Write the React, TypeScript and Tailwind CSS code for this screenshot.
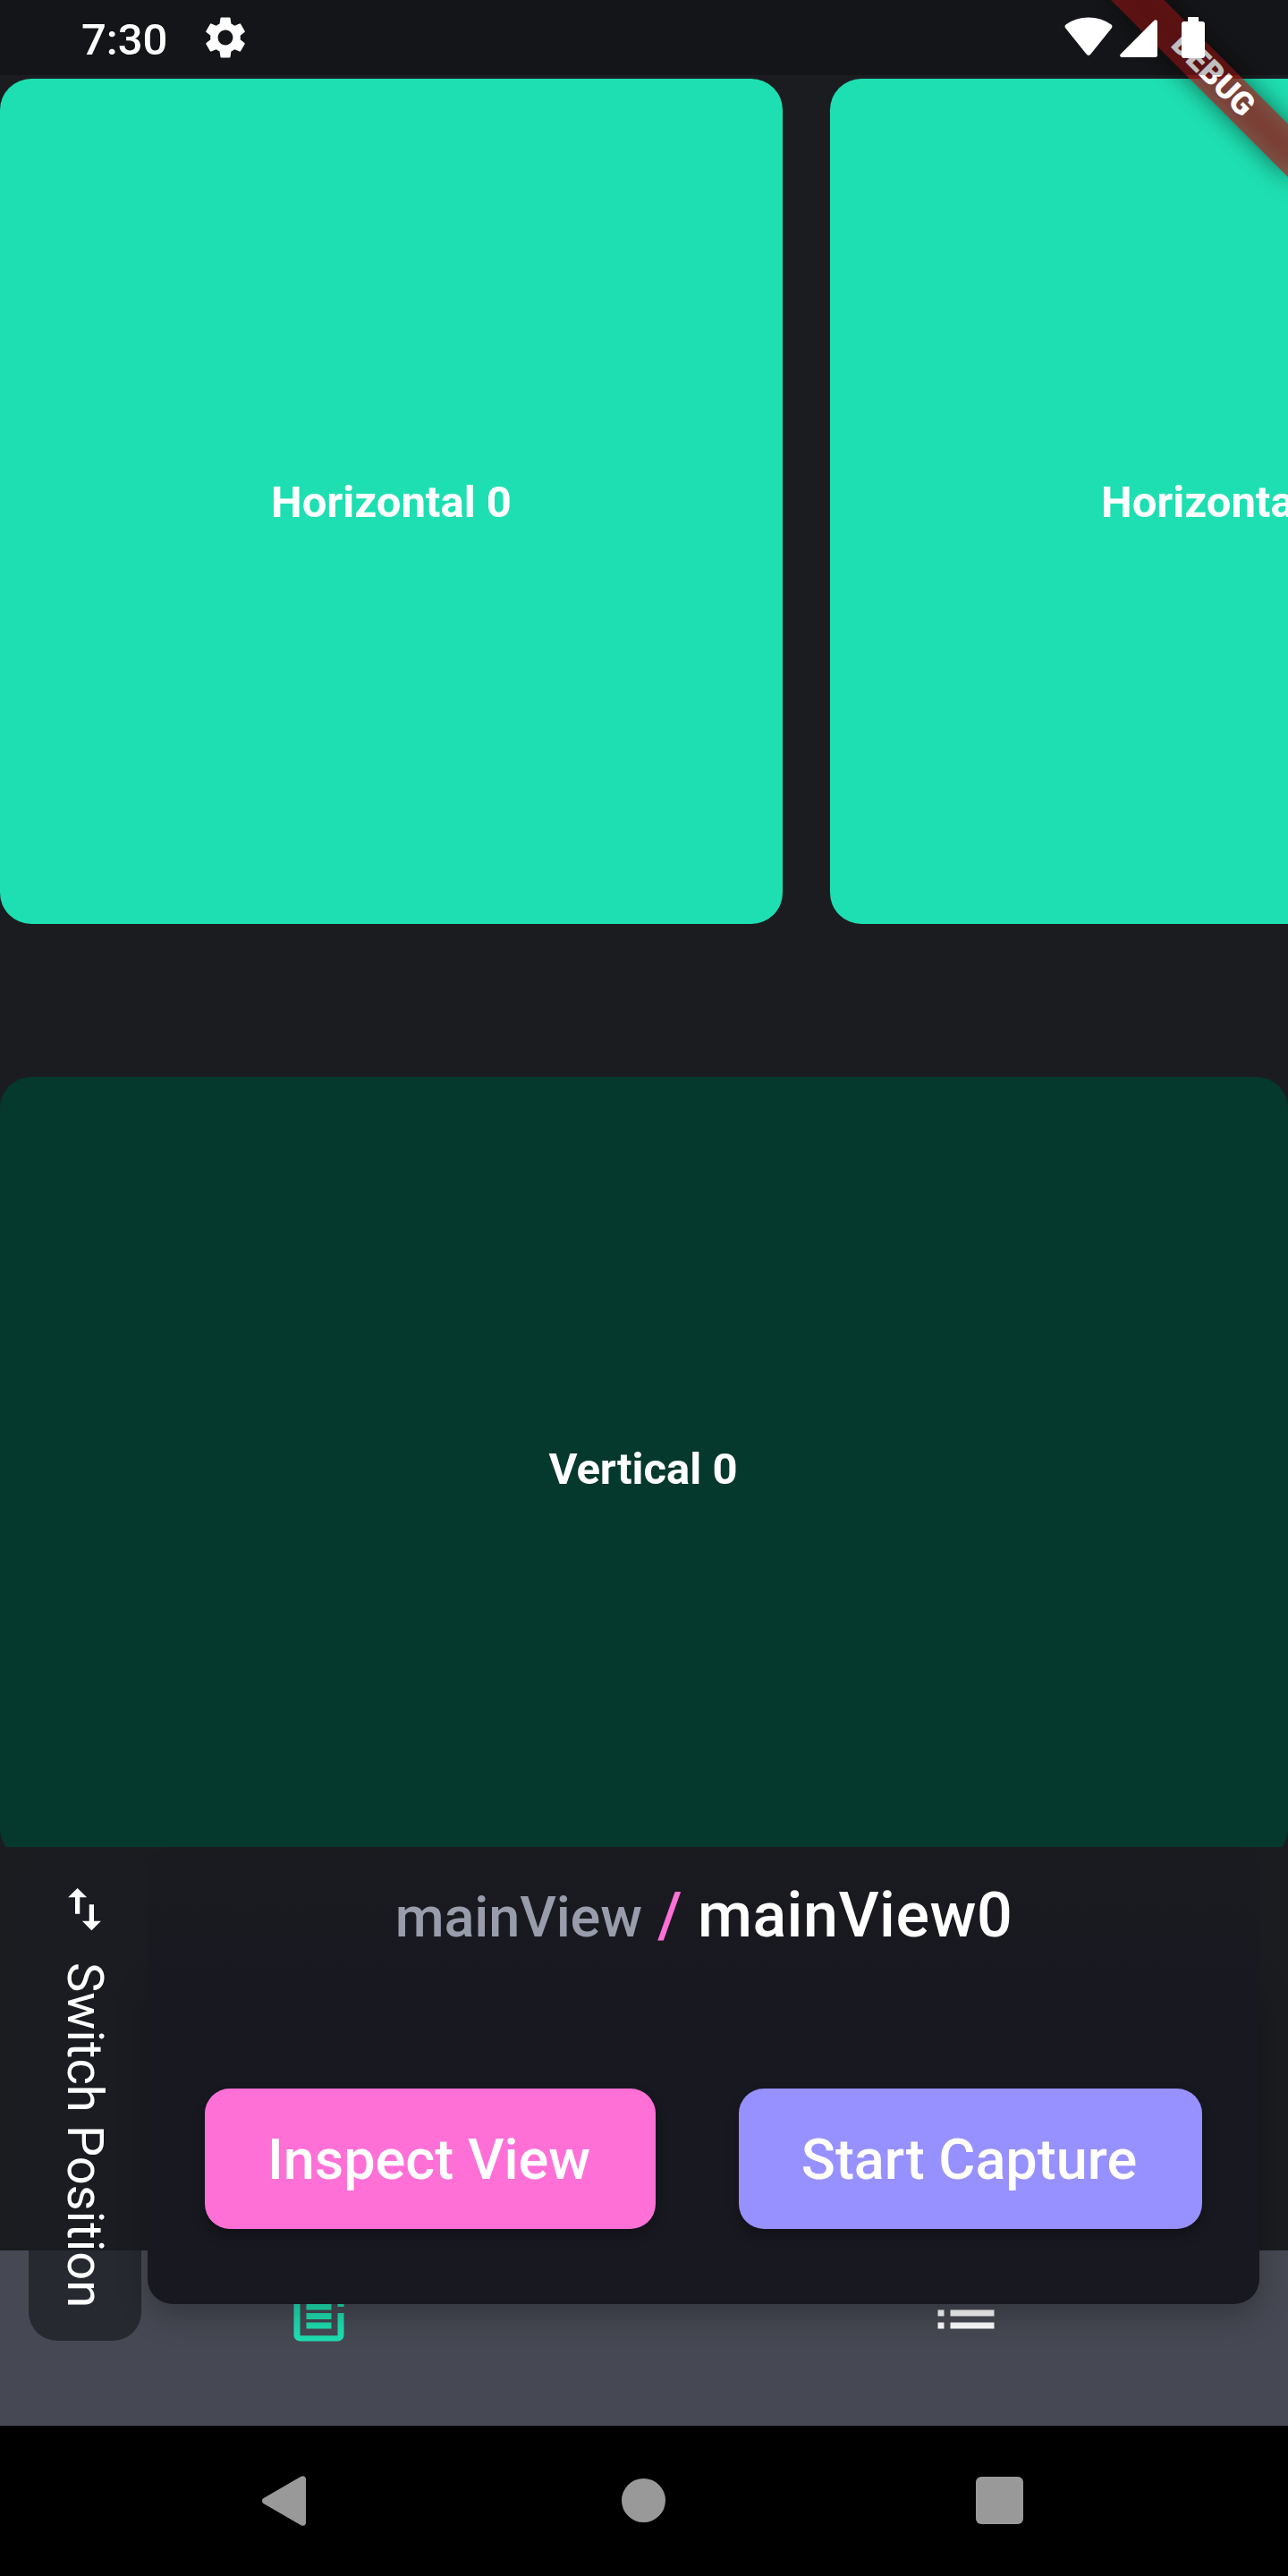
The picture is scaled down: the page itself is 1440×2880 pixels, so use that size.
import { MdImportExport, MdList, MdPostAdd, MdSettings } from "react-icons/md";

function StatusBar() {
  return (
    <header className="absolute inset-x-0 top-0 z-20 flex h-[84px] items-center bg-black/25 pr-[93px] pl-[91px] text-white">
      <span className="w-[133px] pt-[5px] text-[49px] leading-[84px] font-medium">7:30</span>
      <MdSettings className="size-14" />
      <div className="ml-auto flex h-[84px] items-start">
        <svg className="mt-[19px] h-[44px] w-[54px]" viewBox="0 0 54 44" fill="currentColor">
          <path d="M1.6 8.6C9 3.2 17.600 .5 27 .5s18 2.700 25.400 8.100c1.200.9 1.400 2.400.5 3.600L29.400 41.600c-1.300 1.700-3.500 1.700-4.800 0L1.100 12.200c-.9-1.200-.7-2.700.5-3.600z" />
        </svg>
        <svg className="mt-[22px] ml-[8px] h-[42px] w-[42px]" viewBox="0 0 42 42" fill="currentColor">
          <path d="M.8 38.500 38.500.8c1.300-1.300 3.500-.5 3.500 1.500v37.500c0 1.300-.9 2.200-2.200 2.200H2.300C.3 42-.5 39.800.8 38.500z" />
        </svg>
        <div className="mt-[19px] ml-[27px] flex w-[26px] flex-col items-center">
          <div className="h-[5px] w-3 bg-white" />
          <div className="h-[41px] w-full rounded-[3px] bg-white" />
        </div>
      </div>
    </header>
  );
}

function DebugBanner() {
  return (
    <div className="absolute top-0 left-[1440px] z-10 size-0 rotate-45">
      <div className="absolute top-[98px] left-[-140px] h-[42px] w-[280px] bg-black/50 blur-[14px]" />
      <div className="absolute top-[98px] left-[-140px] h-[42px] w-[280px] bg-[#b71c1c]/63 text-center text-[35.7px] leading-10 font-black text-white">
        DEBUG
      </div>
    </div>
  );
}

function Feed() {
  return (
    <main className="h-[2065px] overflow-hidden pt-[88px] text-[49px] font-bold text-white">
      <div className="flex gap-[53px]">
        {[0, 1].map((n) => (
          <div key={n} className="flex h-[945px] w-[875px] shrink-0 items-center justify-center rounded-[35px] bg-[#1edfb1] pt-[3px]">
            Horizontal {n}
          </div>
        ))}
      </div>
      <div className="mt-[171px] flex h-[875px] items-center justify-center rounded-[35px] bg-[#05392d] pt-0.5 pr-0.5">
        Vertical 0
      </div>
    </main>
  );
}

function InspectorOverlay() {
  return (
    <section className="absolute top-[2065px] left-8 z-10 flex items-start gap-[7px] text-white">
      <button className="flex h-[552px] w-[126px] flex-col items-center rounded-[32px] bg-[#1b1d22]/72 pt-[38px]">
        <MdImportExport className="mr-px size-[63px]" />
        <span className="mt-7 text-[56px] leading-[66px] tracking-[0.05px] whitespace-nowrap [writing-mode:vertical-rl]">
          Switch Position
        </span>
      </button>
      <div className="flex h-[511px] w-[1243px] flex-col">
        <div className="relative z-10 flex h-[147px] items-baseline justify-center rounded-t-[28px] bg-linear-to-b from-[#1a1b1f] to-[#181820] pt-6 pl-px font-medium whitespace-pre">
          <span className="text-[63px] tracking-[-0.15px] text-[#989cab]">mainView</span>
          <span className="text-[70px] text-[#ff70d7]"> / </span>
          <span className="text-[70px] tracking-[0.5px]">mainView0</span>
        </div>
        <div className="flex flex-1 justify-between rounded-b-[28px] bg-[#181820] px-16 pt-[123px] text-[63px] font-medium shadow-[0_14px_35px_rgba(0,0,0,0.24)]">
          <button className="h-[157px] w-[504px] rounded-[28px] bg-[#ff70d7] pt-[3px] pr-[3px] shadow-[0_7px_14px_rgba(0,0,0,0.3)]">
            Inspect View
          </button>
          <button className="h-[157px] w-[518px] rounded-[28px] bg-[#9790ff] pt-[3px] pr-[3px] shadow-[0_7px_14px_rgba(0,0,0,0.3)]">
            Start Capture
          </button>
        </div>
      </div>
    </section>
  );
}

export default function App() {
  return (
    <div className="relative flex h-[2880px] w-[1440px] flex-col overflow-hidden bg-[#1b1c20] font-[Roboto,sans-serif]">
      <StatusBar />
      <DebugBanner />
      <Feed />
      <InspectorOverlay />
      <nav className="mt-auto flex h-[196px] bg-[#464853] pt-7">
        <div className="flex flex-1 justify-center text-[#1edfb1]">
          <MdPostAdd className="size-[84px]" />
        </div>
        <div className="flex flex-1 justify-center text-white">
          <MdList className="size-[84px]" />
        </div>
      </nav>
      <footer className="flex h-[168px] items-center bg-black pb-px pl-[293px] text-[#999]">
        <svg className="h-14 w-[49px]" viewBox="0 0 49 56" fill="currentColor">
          <path d="M1.200 25.200 43.500.8C46-.7 49 .7 49 3.500v49c0 2.800-3 4.200-5.500 2.700L1.200 30.800c-1.600-1.400-1.600-4.200 0-5.600z" />
        </svg>
        <div className="ml-[353px] size-[49px] rounded-full bg-[#999]" />
        <div className="ml-[347px] size-[53px] rounded-[6px] bg-[#999]" />
      </footer>
    </div>
  );
}
